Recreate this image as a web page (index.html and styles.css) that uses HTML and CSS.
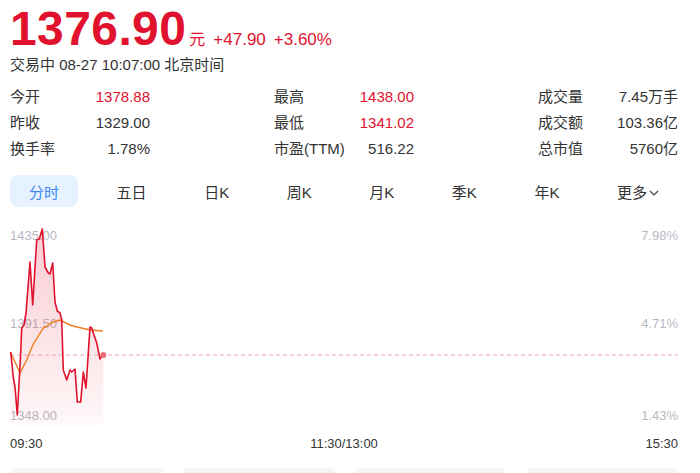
FILE: index.html
```html
<!DOCTYPE html>
<html lang="zh-CN">
<head>
    <meta charset="UTF-8">
    <meta name="viewport" content="width=device-width, initial-scale=1.0">
    <title>行情</title>
    <link rel="stylesheet" href="styles.css">
</head>
<body>
    <div id="page">
        <div class="quote-head">
            <span class="price">1376.90</span>
            <span class="unit">元</span>
            <span class="change">+47.90</span>
            <span class="change">+3.60%</span>
        </div>
        <div class="status">交易中 08-27 10:07:00 北京时间</div>

        <div class="stats">
            <div class="stat-col">
                <div class="stat"><span>今开</span><span class="up">1378.88</span></div>
                <div class="stat"><span>昨收</span><span>1329.00</span></div>
                <div class="stat"><span>换手率</span><span>1.78%</span></div>
            </div>
            <div class="stat-col">
                <div class="stat"><span>最高</span><span class="up">1438.00</span></div>
                <div class="stat"><span>最低</span><span class="up">1341.02</span></div>
                <div class="stat"><span>市盈(TTM)</span><span>516.22</span></div>
            </div>
            <div class="stat-col">
                <div class="stat"><span>成交量</span><span>7.45万手</span></div>
                <div class="stat"><span>成交额</span><span>103.36亿</span></div>
                <div class="stat"><span>总市值</span><span>5760亿</span></div>
            </div>
        </div>

        <div class="tabs">
            <div class="tab active">分时</div>
            <div class="tab">五日</div>
            <div class="tab">日K</div>
            <div class="tab">周K</div>
            <div class="tab">月K</div>
            <div class="tab">季K</div>
            <div class="tab">年K</div>
            <div class="tab">更多
                <svg class="chev" width="10" height="6" viewBox="0 0 10 6"><path d="M1 1 L5 5 L9 1" fill="none" stroke="#444" stroke-width="1.2"/></svg>
            </div>
        </div>

        <div class="chart">
            <svg width="668" height="200" viewBox="10 225 668 200">
                <defs>
                    <linearGradient id="fill" x1="0" y1="0" x2="0" y2="1">
                        <stop offset="0" stop-color="#e8142f" stop-opacity="0.22"/>
                        <stop offset="1" stop-color="#e8142f" stop-opacity="0.03"/>
                    </linearGradient>
                </defs>
                <g class="axis">
                    <text x="10" y="239.5">1435.00</text>
                    <text x="10" y="327.5">1391.50</text>
                    <text x="10" y="419.5">1348.00</text>
                    <text x="678" y="239.5" text-anchor="end">7.98%</text>
                    <text x="678" y="327.5" text-anchor="end">4.71%</text>
                    <text x="678" y="419.5" text-anchor="end">1.43%</text>
                </g>
                <polygon fill="url(#fill)" points="10.7,352 13.3,377 15,387 17.3,415 20.7,353 21.7,328 24,325 26,313 30,262 32.7,305 36.7,240 39.3,239 42.3,229 45,267 48.3,273 50,274 52.7,263 55,302 57.3,311 60,313 61.7,320 63.3,370 66.7,380 70,370 71.7,372 75,369 77.3,402 80.7,402 83.3,372 86,388 90,327 91.7,328 96.7,343 100,359 103.3,354 103.3,425 10.7,425"/>
                <line x1="10" y1="355" x2="678" y2="355" stroke="#f3a3ab" stroke-width="1.2" stroke-dasharray="4 3"/>
                <polyline fill="none" stroke="#f07b22" stroke-width="1.4" points="10.7,353 15,362 20,373 26.7,360 33.3,344 43.3,328 53.3,322 60,320 70,325 77,327 90,330 103,331"/>
                <polyline fill="none" stroke="#e0122e" stroke-width="1.6" stroke-linejoin="round" points="10.7,352 13.3,377 15,387 17.3,415 20.7,353 21.7,328 24,325 26,313 30,262 32.7,305 36.7,240 39.3,239 42.3,229 45,267 48.3,273 50,274 52.7,263 55,302 57.3,311 60,313 61.7,320 63.3,370 66.7,380 70,370 71.7,372 75,369 77.3,402 80.7,402 83.3,372 86,388 90,327 91.7,328 96.7,343 100,359 103.3,354"/>
                <circle cx="103.3" cy="355" r="3" fill="#ea6a7a"/>
            </svg>
        </div>

        <div class="times">
            <span>09:30</span>
            <span>11:30/13:00</span>
            <span>15:30</span>
        </div>

        <div class="cards">
            <div class="card"></div>
            <div class="card"></div>
            <div class="card"></div>
            <div class="card"></div>
        </div>
    </div>
</body>
</html>
```

FILE: styles.css
```css
body {
    margin: 0;
    background-color: #fff;
    font-family: "Liberation Sans", "Noto Sans CJK SC", sans-serif;
    color: #333;
    overflow: hidden;
}

#page {
    padding: 5px 22px 0 10px;
}

.quote-head {
    display: flex;
    align-items: baseline;
    color: #e0122e;
    line-height: 48px;
    height: 48px;
}

.price {
    font-size: 48px;
    font-weight: bold;
    letter-spacing: 0.4px;
}

.unit {
    font-size: 16px;
    margin-left: 3px;
}

.change {
    font-size: 17px;
    margin-left: 8px;
}

.status {
    margin-top: 2px;
    font-size: 15px;
    line-height: 20px;
}

.stats {
    display: flex;
    justify-content: space-between;
    margin-top: 9px;
}

.stat-col {
    width: 140px;
}

.stat {
    display: flex;
    justify-content: space-between;
    font-size: 15px;
    line-height: 26px;
    height: 26px;
}

.up {
    color: #e0122e;
}

.tabs {
    display: flex;
    justify-content: space-between;
    margin-top: 13px;
}

.tab {
    display: flex;
    align-items: center;
    height: 32px;
    padding: 0 19px;
    font-size: 15px;
    border-radius: 8px;
    color: #333;
}

.tab.active {
    background-color: #e6f2ff;
    color: #3d86f5;
}

.chev {
    margin-left: 2px;
    margin-top: 3px;
}

.chart {
    margin-top: 18px;
    height: 200px;
}

.chart svg {
    display: block;
    overflow: visible;
}

.axis text {
    font-size: 13px;
    fill: #b9b9c2;
}

.times {
    display: flex;
    justify-content: space-between;
    margin-top: 11px;
    font-size: 13px;
    line-height: 16px;
}

.cards {
    display: grid;
    grid-template-columns: repeat(4, 1fr);
    gap: 20px;
    margin-top: 16px;
    padding-left: 1px;
}

.card {
    height: 5px;
    background-color: #f4f5f9;
    border-radius: 10px 10px 0 0;
}
```
